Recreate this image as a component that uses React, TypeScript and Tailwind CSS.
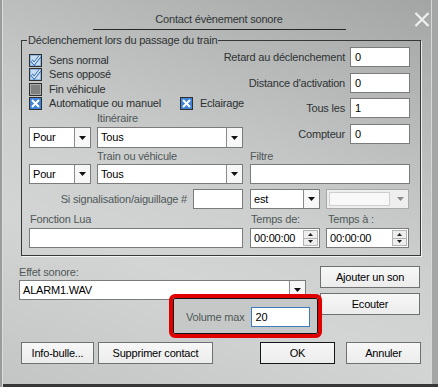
import React from "react";

const dim = "text-[#4f5858]";

function Arrow({ color = "#111" }: { color?: string }) {
  return (
    <svg width="7" height="4" viewBox="0 0 7 4">
      <path d="M0 0h7L3.5 4z" fill={color} />
    </svg>
  );
}

function Check({ kind }: { kind: "on" | "off" | "x" }) {
  return (
    <svg width="13" height="13" viewBox="0 0 13 13" className="flex-none">
      {kind === "off" && (
        <>
          <rect x="0.5" y="0.5" width="12" height="12" fill="#7f8181" stroke="#2f2f2f" />
          <rect x="1.5" y="1.5" width="10" height="10" fill="none" stroke="#a9abab" />
        </>
      )}
      {kind === "on" && (
        <>
          <rect x="0.5" y="0.5" width="12" height="12" fill="#c9ddf1" stroke="#2f2f2f" />
          <rect x="1.5" y="1.5" width="10" height="10" fill="none" stroke="#8fb6e0" />
          <path d="M2.5 6.5L5.2 9.6L11 2.2" fill="none" stroke="#2f6fc4" strokeWidth="3" />
          <path d="M2.5 6.5L5.2 9.6L11 2.2" fill="none" stroke="#fff" strokeWidth="1.1" />
        </>
      )}
      {kind === "x" && (
        <>
          <rect x="0.5" y="0.5" width="12" height="12" fill="#3f84d8" stroke="#2f2f2f" />
          <path d="M3 3L10 10M10 3L3 10" stroke="#fff" strokeWidth="2" />
        </>
      )}
    </svg>
  );
}

function CheckRow({ kind, label, className = "" }: { kind: "on" | "off" | "x"; label: string; className?: string }) {
  return (
    <div className={`flex items-center gap-[7px] h-[14.5px] whitespace-nowrap text-[#2a2f2f] ${className}`}>
      <Check kind={kind} />
      <span>{label}</span>
    </div>
  );
}

function Box({ className = "", children }: { className?: string; children?: React.ReactNode }) {
  return (
    <div className={`flex items-center bg-white border border-[#7b7b7b] px-[4px] text-black ${className}`}>
      {children}
    </div>
  );
}

function Select({ value, className = "" }: { value: string; className?: string }) {
  return (
    <div className={`flex bg-white border border-[#7b7b7b] ${className}`}>
      <div className="flex-1 flex items-center px-[3px] text-black">{value}</div>
      <div className="w-[16px] flex items-center justify-center border-l border-[#8a8a8a] bg-[#f7f7f7]">
        <Arrow />
      </div>
    </div>
  );
}

function Time({ className = "" }: { className?: string }) {
  return (
    <div className={`flex bg-white border border-[#7b7b7b] ${className}`}>
      <div className="flex-1 flex items-center pl-[3px] text-black">00:00:00</div>
      <div className="w-[15px] my-[1px] mr-[1px] flex flex-col border border-[#b3b3b3] bg-[#eeeeee]">
        <div className="flex-1 flex items-center justify-center border-b border-[#b3b3b3]">
          <svg width="5" height="3" viewBox="0 0 5 3">
            <path d="M0 3h5L2.5 0z" fill="#222" />
          </svg>
        </div>
        <div className="flex-1 flex items-center justify-center">
          <svg width="5" height="3" viewBox="0 0 5 3">
            <path d="M0 0h5L2.5 3z" fill="#222" />
          </svg>
        </div>
      </div>
    </div>
  );
}

function Field({ label, value, className = "" }: { label: string; value: string; className?: string }) {
  return (
    <div className={`flex items-center justify-end gap-[5px] h-[20px] whitespace-nowrap ${className}`}>
      <span className="text-[#2e3333]">{label}</span>
      <Box className="w-[60px] h-[20px] flex-none">{value}</Box>
    </div>
  );
}

function Button({ label, className = "" }: { label: string; className?: string }) {
  return (
    <div
      className={`flex items-center justify-center h-[22px] bg-[linear-gradient(#f7f7f7,#ececec)] text-black ${className}`}
    >
      {label}
    </div>
  );
}

export default function App() {
  return (
    <div className="relative w-[438px] h-[387px] overflow-hidden text-[11px] leading-[13px] tracking-[-0.2px] font-['Liberation_Sans',Arial,sans-serif] bg-[linear-gradient(200deg,#a3a5a5_0%,#b6b8b8_22%,#cdcfcf_50%,#d3d4d4_68%,#c3c5c5_100%)] shadow-[inset_2px_0_0_#9a9c9c,inset_3px_0_0_#dcdcdc,inset_0_-3px_0_#363838,inset_-6px_0_0_#a4a6a6,inset_-7px_0_0_#d6d8d8]">
      {/* Title */}
      <div className="h-[30px] w-[253px] mx-auto pt-[13px] border-b border-[#262828] text-center text-[#303535]">
        Contact évènement sonore
      </div>
      <svg className="absolute right-[8px] top-[12px]" width="16" height="15" viewBox="0 0 16 15">
        <path d="M1.5 1L14.5 14M14.5 1L1.5 14" stroke="#eef0f0" strokeWidth="2.2" />
      </svg>

      {/* Trigger group */}
      <fieldset className="ml-[21px] mt-[4px] w-[400px] min-w-0 border border-[#363838] shadow-[1px_1px_0_rgba(255,255,255,0.75)] pl-[5px] pb-[7px]">
        <legend className="px-[1px] text-[#2e3333]">Déclenchement lors du passage du train</legend>

        <div className="flex pl-[2px]">
          <div className="w-[215px] flex-none pt-[6px]">
            <CheckRow kind="on" label="Sens normal" />
            <CheckRow kind="on" label="Sens opposé" />
            <CheckRow kind="off" label="Fin véhicule" />
            <div className="flex">
              <CheckRow kind="x" label="Automatique ou manuel" className="w-[161px]" />
              <CheckRow kind="x" label="Eclairage" className="gap-[5px]" />
            </div>
            <div className={`mt-[1px] ml-[68px] h-[13px] ${dim}`}>Itinéraire</div>
            <div className="mt-[2px] flex gap-[6px]">
              <Select value="Pour" className="w-[62px] h-[21px]" />
              <Select value="Tous" className="w-[146px] h-[21px]" />
            </div>
          </div>
          <div className="flex-1 min-w-0 flex flex-col pr-[10px]">
            <Field label="Retard au déclenchement" value="0" className="gap-[3px]" />
            <Field label="Distance d'activation" value="0" className="mt-[6px]" />
            <Field label="Tous les" value="1" className="mt-[5px]" />
            <Field label="Compteur" value="0" className="mt-[6px]" />
          </div>
        </div>

        <div className="pl-[2px]">
          <div className={`mt-[2px] flex h-[13px] ${dim}`}>
            <span className="w-[221px] pl-[68px]">Train ou véhicule</span>
            <span>Filtre</span>
          </div>
          <div className="mt-[1px] flex h-[20px]">
            <Select value="Pour" className="w-[62px]" />
            <Select value="Tous" className="ml-[6px] w-[146px]" />
            <Box className="ml-[7px] w-[160px]" />
          </div>
          <div className="mt-[5px] flex h-[20px]">
            <div className="w-[221px] flex items-center justify-end gap-[6px] pr-[7px]">
              <span className={dim}>Si signalisation/aiguillage #</span>
              <Box className="w-[50px] h-[20px]" />
            </div>
            <Select value="est" className="w-[70px]" />
            <div className="ml-[6px] w-[83px] flex bg-[#eeeeee] border border-[#a9a9a9]">
              <div className="flex-1 m-[2px] border border-[#cfcfcf] bg-[#f8f8f8]" />
              <div className="w-[16px] flex items-center justify-center">
                <Arrow color="#8a8a8a" />
              </div>
            </div>
          </div>
          <div className={`mt-[4px] flex h-[13px] ${dim}`}>
            <span className="w-[221px] pl-[1px]">Fonction Lua</span>
            <span className="w-[76px] pl-[1px]">Temps de:</span>
            <span className="pl-[2px]">Temps à :</span>
          </div>
          <div className="mt-[2px] flex h-[20px]">
            <Box className="w-[214px]" />
            <Time className="ml-[7px] w-[70px]" />
            <Time className="ml-[6px] w-[83px]" />
          </div>
        </div>
      </fieldset>

      {/* Sound */}
      <div className="flex h-[86px] pl-[19px]">
        <div className="w-[287px] flex-none">
          <div className={`mt-[10px] h-[13px] ${dim}`}>Effet sonore:</div>
          <div className="mt-[1px] h-[20px] flex bg-white border border-[#7b7b7b]">
            <div className="flex-1 flex items-center px-[3px] text-black">ALARM1.WAV</div>
            <div className="w-[16px] flex items-center justify-center border-l border-[#8a8a8a] bg-[#f7f7f7]">
              <Arrow />
            </div>
          </div>
        </div>
        <div className="ml-[14px] w-[100px]">
          <Button label="Ajouter un son" className="mt-[10px] border border-[#6f7171]" />
          <Button label="Ecouter" className="mt-[5px] border border-[#6f7171]" />
        </div>
      </div>

      {/* Buttons */}
      <div className="flex justify-between pl-[21px] pr-[17px] h-[22px]">
        <div className="flex gap-[4px]">
          <Button label="Info-bulle..." className="w-[73px] border border-[#6f7171]" />
          <Button label="Supprimer contact" className="w-[115px] border border-[#6f7171]" />
        </div>
        <div className="flex gap-[11px]">
          <Button label="OK" className="w-[75px] border border-[#161616]" />
          <Button label="Annuler" className="w-[75px] border border-[#6f7171]" />
        </div>
      </div>

      {/* Highlighted volume setting */}
      <div className="absolute left-[169px] top-[294px] w-[153px] h-[44px] rounded-[6px] border-[4px] border-[#e10000]">
        <div className="h-full rounded-[2px] border-[1.5px] border-[#141414] bg-[#c6c8c8] flex items-center pl-[12px] pt-[2px] gap-[6px]">
          <span className={dim}>Volume max</span>
          <div className="w-[59px] h-[20px] flex items-center px-[4px] bg-white border border-[#3d7cbd] text-black">20</div>
        </div>
      </div>
    </div>
  );
}
